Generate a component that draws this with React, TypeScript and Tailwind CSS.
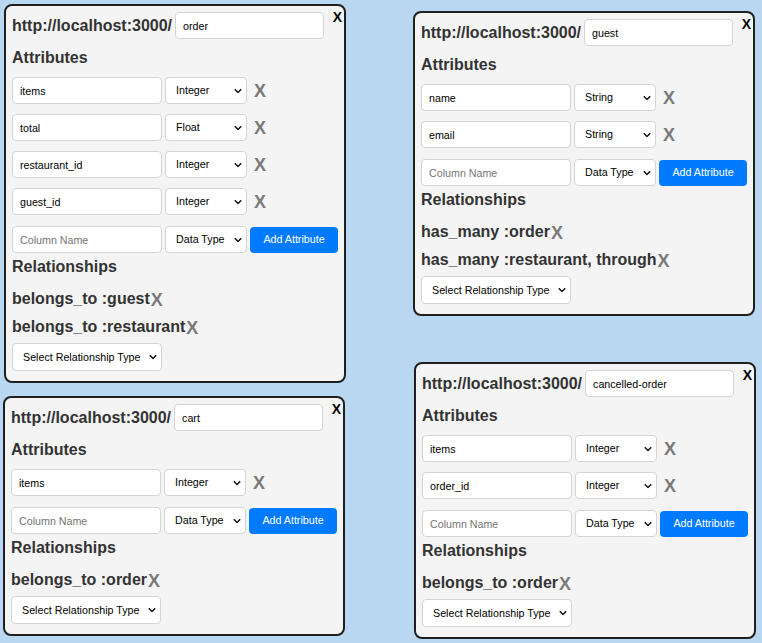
type Attr = { name: string; type: string };

interface Model {
  name: string;
  attrs: Attr[];
  rels: string[];
  pos: string;
}

const models: Model[] = [
  {
    name: "order",
    attrs: [
      { name: "items", type: "Integer" },
      { name: "total", type: "Float" },
      { name: "restaurant_id", type: "Integer" },
      { name: "guest_id", type: "Integer" },
    ],
    rels: ["belongs_to :guest", "belongs_to :restaurant"],
    pos: "left-[4px] top-[4px]",
  },
  {
    name: "guest",
    attrs: [
      { name: "name", type: "String" },
      { name: "email", type: "String" },
    ],
    rels: ["has_many :order", "has_many :restaurant, through"],
    pos: "left-[413px] top-[11px]",
  },
  {
    name: "cart",
    attrs: [{ name: "items", type: "Integer" }],
    rels: ["belongs_to :order"],
    pos: "left-[3px] top-[396px]",
  },
  {
    name: "cancelled-order",
    attrs: [
      { name: "items", type: "Integer" },
      { name: "order_id", type: "Integer" },
    ],
    rels: ["belongs_to :order"],
    pos: "left-[414px] top-[362px]",
  },
];

const dataTypes = ["Data Type", "String", "Integer", "Float", "Boolean", "Text"];

function Chevron() {
  return (
    <svg
      className="absolute right-[5px] top-1/2 -translate-y-1/2 pointer-events-none"
      width="8"
      height="5"
      viewBox="0 0 8 5"
    >
      <path d="M0.8 0.8L4 4L7.2 0.8" stroke="#111" strokeWidth="1.5" fill="none" />
    </svg>
  );
}

function TypeSelect({ value }: { value: string }) {
  return (
    <div className="relative w-[82px] h-[27px] shrink-0">
      <select
        defaultValue={value}
        className="appearance-none w-full h-full bg-white border border-[#d4d4d4] rounded-[4px] pl-[10px] text-[10.7px] text-black outline-none"
      >
        {dataTypes.map((t) => (
          <option key={t}>{t}</option>
        ))}
      </select>
      <Chevron />
    </div>
  );
}

function TextInput({ value, placeholder }: { value?: string; placeholder?: string }) {
  return (
    <input
      defaultValue={value}
      placeholder={placeholder}
      className="w-[150px] h-[27px] shrink-0 bg-white border border-[#d4d4d4] rounded-[4px] pl-[7px] text-[10.7px] text-black placeholder-[#757575] outline-none"
    />
  );
}

function ModelCard({ model }: { model: Model }) {
  return (
    <div
      className={`absolute ${model.pos} w-[342px] border-2 border-[#1f1f1f] rounded-[8px] bg-[#f4f4f4] px-[6px] pt-[6px] pb-[10px]`}
    >
      {/* close */}
      <button className="absolute top-[4px] right-[2px] text-[14px] leading-[14px] font-bold text-black">
        X
      </button>

      {/* header */}
      <div className="flex items-center">
        <span className="text-[16px] leading-[19px] font-bold text-[#333]">http://localhost:3000/</span>
        <input
          defaultValue={model.name}
          className="ml-[3px] w-[149px] h-[27px] bg-white border border-[#d4d4d4] rounded-[4px] pl-[7px] text-[10.7px] text-black outline-none"
        />
      </div>

      <h3 className="mt-[9px] mb-[10px] text-[16px] leading-[19px] font-bold text-[#333]">Attributes</h3>

      <div className="flex flex-col gap-[10px]">
        {model.attrs.map((a) => (
          <div key={a.name} className="flex items-center gap-[3px]">
            <TextInput value={a.name} />
            <TypeSelect value={a.type} />
            <span className="ml-[4px] text-[18px] leading-[18px] font-bold text-[#7a7a7a]">X</span>
          </div>
        ))}
        {/* new attribute */}
        <div className="mt-[1px] flex items-center gap-[3px]">
          <TextInput placeholder="Column Name" />
          <TypeSelect value="Data Type" />
          <button className="w-[88px] h-[26px] bg-[#007bff] rounded-[4px] text-white text-[10.7px]">
            Add Attribute
          </button>
        </div>
      </div>

      <h3 className="mt-[4px] text-[16px] leading-[19px] font-bold text-[#333]">Relationships</h3>

      <div className="mt-[13px] flex flex-col gap-[9px]">
        {model.rels.map((r) => (
          <div key={r} className="flex items-baseline h-[19px] text-[16px] leading-[19px] font-bold text-[#333]">
            <span>{r}</span>
            <span className="ml-[1px] translate-y-[2px] text-[18px] font-bold text-[#7a7a7a]">X</span>
          </div>
        ))}
      </div>

      <div className="relative mt-[7px] w-[150px] h-[28px]">
        <select
          defaultValue="Select Relationship Type"
          className="appearance-none w-full h-full bg-white border border-[#d4d4d4] rounded-[4px] pl-[10px] text-[10.7px] text-black outline-none"
        >
          <option>Select Relationship Type</option>
          <option>belongs_to</option>
          <option>has_many</option>
          <option>has_one</option>
        </select>
        <Chevron />
      </div>
    </div>
  );
}

export default function App() {
  return (
    <div className="relative w-full h-[643px] bg-[#b9d7f1] overflow-hidden font-['Liberation_Sans',Arial,sans-serif]">
      {models.map((m) => (
        <ModelCard key={m.name} model={m} />
      ))}
    </div>
  );
}
